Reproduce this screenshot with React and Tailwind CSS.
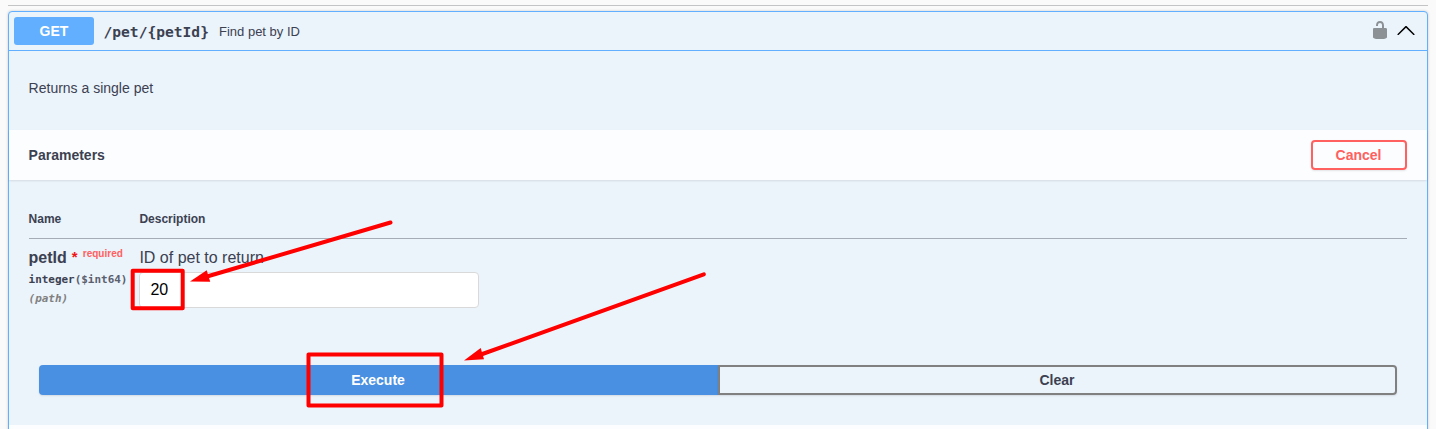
function UnlockedIcon() {
  return (
    <svg viewBox="0 0 20 20" className="h-5 w-5 fill-black opacity-40">
      <path d="M15.8 8H14V5.6C14 2.703 12.665 1 10 1 7.334 1 6 2.703 6 5.6V6h2v-.801C8 3.754 8.797 3 10 3c1.203 0 2 .754 2 2.199V8H4c-.553 0-1 .646-1 1.199V17c0 .549.428 1.139.951 1.307l1.197.387C5.672 18.861 6.55 19 7.1 19h5.8c.549 0 1.428-.139 1.951-.307l1.196-.387c.524-.167.953-.757.953-1.306V9.199C17 8.646 16.352 8 15.8 8z" />
    </svg>
  );
}

function CollapseIcon() {
  return (
    <svg viewBox="0 0 20 20" className="h-5 w-5 fill-black">
      <path d="M17.418 14.908c.272.268.709.268.979 0s.271-.701 0-.969l-7.908-7.83c-.27-.268-.707-.268-.979 0l-7.908 7.83c-.27.268-.27.701 0 .969.271.268.709.268.979 0L10 7.767l7.418 7.141z" />
    </svg>
  );
}

function Summary() {
  return (
    <div className="flex h-[39px] shrink-0 items-center border-b border-[#61affe] px-[5px]">
      <button className="h-7 w-20 rounded-[3px] bg-[#61affe] text-center text-[14px] font-bold text-white">
        GET
      </button>
      <span className="ml-[9.5px] w-[105.5px] pt-[1px] font-['DejaVu_Sans_Mono',monospace] text-[14.6px] leading-5 font-bold whitespace-nowrap">
        /pet/{'{petId}'}
      </span>
      <span className="ml-2.5 pt-[2px] text-[13px]">Find pet by ID</span>
      <div className="ml-auto flex gap-1.5 pr-1.5 pb-[3px]">
        <UnlockedIcon />
        <CollapseIcon />
      </div>
    </div>
  );
}

function Parameters() {
  return (
    <div className="grid shrink-0 grid-cols-[110.8px_1fr] pt-[31px] pr-5 pl-[19.6px]">
      <div className="h-[28px] border-b border-[#3b4151]/40 text-[12px] leading-4 font-bold">Name</div>
      <div className="h-[28px] border-b border-[#3b4151]/40 text-[12px] leading-4 font-bold">Description</div>
      <div className="pt-[9px]">
        <div className="flex h-5 text-[16px] leading-5 font-bold whitespace-nowrap">
          petId
          <span className="ml-[5px] w-[6px] text-[15px] leading-[18px] text-[#f01414]">*</span>
          <span className="ml-[5px] text-[10px] leading-[12px] text-[#ff6060]">required</span>
        </div>
        <div className="mt-[4px] font-['DejaVu_Sans_Mono',monospace] text-[10.95px] leading-4 font-bold whitespace-nowrap">
          integer<span className="text-[#5a606e]">($int64)</span>
        </div>
        <div className="mt-[3px] font-['DejaVu_Sans_Mono',monospace] text-[10.95px] leading-4 font-bold text-[#808080] italic">
          (path)
        </div>
      </div>
      <div className="pt-[9px]">
        <p className="h-6 text-[16px] leading-5">ID of pet to return</p>
        <input
          type="text"
          defaultValue="20"
          className="block h-9 w-[340px] rounded-[4px] border border-[#d9d9d9] bg-white px-2.5 text-[16px] text-black"
        />
      </div>
    </div>
  );
}

function Annotations() {
  return (
    <svg viewBox="0 0 1436 429" className="pointer-events-none absolute inset-0 h-[429px] w-[1436px]">
      <g fill="none" stroke="#ff0000" strokeWidth="4" strokeLinecap="round" strokeLinejoin="round">
        <rect x="132.7" y="270.7" width="50" height="37.6" />
        <rect x="308.5" y="354.5" width="133" height="51" />
        <path d="M390.5 222.5 207 276.5" />
        <path d="M703.8 274.3 481 354.5" />
      </g>
      <g fill="#ff0000">
        <path d="M190 281.5 206.7 270.3 210.2 281.7Z" />
        <path d="M464 360.5 480.7 348 484 359.2Z" />
      </g>
    </svg>
  );
}

export default function App() {
  return (
    <div className="relative flex h-[429px] w-[1436px] flex-col overflow-hidden bg-[#fafafa] px-2 pt-[5px] font-['Liberation_Sans',Arial,sans-serif] text-[#3b4151]">
      <div className="h-px shrink-0 bg-[#c3c4c6]" />
      <section className="mt-[5px] flex h-[440px] shrink-0 flex-col rounded-[4px] border border-[#61affe] bg-[#ebf3fb] shadow-[0_0_3px_rgba(0,0,0,0.19)]">
        <Summary />
        <p className="h-[79px] shrink-0 px-[19.6px] pt-[27px] text-[14px] leading-5">Returns a single pet</p>
        <div className="flex h-[50px] shrink-0 items-center justify-between bg-white/85 pr-5 pl-[19.6px] shadow-[0_1px_2px_rgba(0,0,0,0.1)]">
          <h4 className="text-[14px] font-bold">Parameters</h4>
          <button className="h-[30px] w-24 rounded-[4px] border-2 border-[#ff6060] pr-px text-[14px] font-bold text-[#ff6060] shadow-[0_1px_2px_rgba(0,0,0,0.1)]">
            Cancel
          </button>
        </div>
        <Parameters />
        <div className="mt-[57px] flex h-[30px] shrink-0 px-[30px] text-[14px] font-bold">
          <button className="w-[679px] rounded-l-[4px] bg-[#4990e2] pr-px text-white shadow-[0_1px_2px_rgba(0,0,0,0.1)]">
            Execute
          </button>
          <button className="flex-1 rounded-r-[4px] border-2 border-[#808080] pr-px shadow-[0_1px_2px_rgba(0,0,0,0.1)]">
            Clear
          </button>
        </div>
        <div className="mt-[30px] flex-1 bg-white/85" />
      </section>
      <Annotations />
    </div>
  );
}
